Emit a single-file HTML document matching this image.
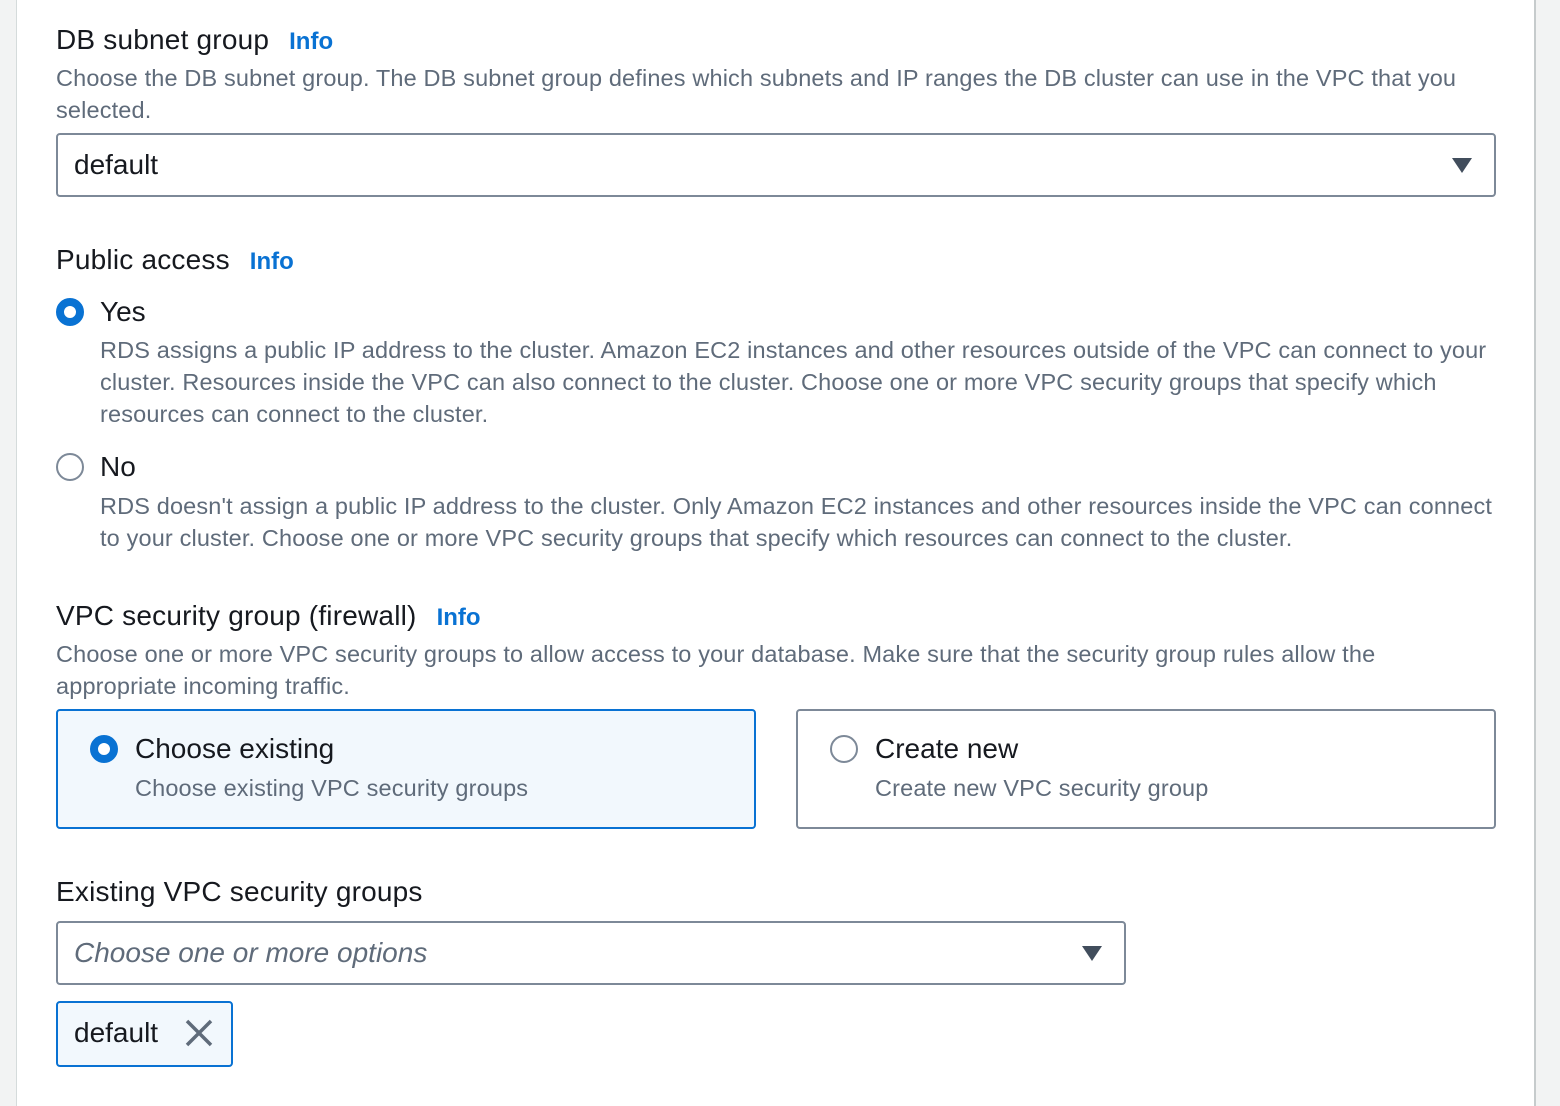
<!DOCTYPE html>
<html><head><meta charset="utf-8"><style>
*{margin:0;padding:0;box-sizing:border-box}
body{width:1560px;height:1092px;background:#f2f3f3;font-family:"Liberation Sans",sans-serif;position:relative;overflow:hidden;color:#16191f}
#panel{position:absolute;left:16px;top:-4px;width:1520px;height:1110px;background:#fff;border-left:1px solid #d5dbdb;border-right:2px solid #c6cbcc}
.a{position:absolute;white-space:nowrap}
.h{font-size:28px;line-height:34px;color:#16191f;letter-spacing:0.2px}
.info{color:#0972d3;font-weight:bold;font-size:24px;margin-left:20px;letter-spacing:0}
.d{font-size:23.5px;line-height:32px;color:#5f6b7a;letter-spacing:0.15px}
.sel{position:absolute;border:2px solid #7d8998;border-radius:4px;background:#fff}
.caret{position:absolute;width:0;height:0;border-left:10px solid transparent;border-right:10px solid transparent;border-top:15px solid #414d5c}
.rad{position:absolute;width:28px;height:28px;border-radius:50%}
.on{background:#fff;border:8px solid #0972d3}
.off{border:2px solid #7d8998;background:#fff}
.lab{font-size:28px;line-height:34px;color:#16191f}
</style></head><body>
<div id="panel"></div>

<div class="a h" style="left:56px;top:23px">DB subnet group<span class="info">Info</span></div>
<div class="a d" style="left:56px;top:62px">Choose the DB subnet group. The DB subnet group defines which subnets and IP ranges the DB cluster can use in the VPC that you</div>
<div class="a d" style="left:56px;top:94px">selected.</div>
<div class="sel" style="left:56px;top:133px;width:1440px;height:64px"></div>
<div class="a lab" style="left:74px;top:148px">default</div>
<div class="caret" style="left:1452px;top:158px"></div>

<div class="a h" style="left:56px;top:243px">Public access<span class="info">Info</span></div>
<div class="rad on" style="left:56px;top:298px"></div>
<div class="a lab" style="left:100px;top:295px">Yes</div>
<div class="a d" style="left:100px;top:334px">RDS assigns a public IP address to the cluster. Amazon EC2 instances and other resources outside of the VPC can connect to your</div>
<div class="a d" style="left:100px;top:366px">cluster. Resources inside the VPC can also connect to the cluster. Choose one or more VPC security groups that specify which</div>
<div class="a d" style="left:100px;top:398px">resources can connect to the cluster.</div>
<div class="rad off" style="left:56px;top:453px"></div>
<div class="a lab" style="left:100px;top:450px">No</div>
<div class="a d" style="left:100px;top:490px">RDS doesn't assign a public IP address to the cluster. Only Amazon EC2 instances and other resources inside the VPC can connect</div>
<div class="a d" style="left:100px;top:522px">to your cluster. Choose one or more VPC security groups that specify which resources can connect to the cluster.</div>

<div class="a h" style="left:56px;top:599px">VPC security group (firewall)<span class="info">Info</span></div>
<div class="a d" style="left:56px;top:638px">Choose one or more VPC security groups to allow access to your database. Make sure that the security group rules allow the</div>
<div class="a d" style="left:56px;top:670px">appropriate incoming traffic.</div>

<div class="sel" style="left:56px;top:709px;width:700px;height:120px;border-color:#0972d3;background:#f2f8fd"></div>
<div class="rad on" style="left:90px;top:735px"></div>
<div class="a lab" style="left:135px;top:732px">Choose existing</div>
<div class="a d" style="left:135px;top:772px">Choose existing VPC security groups</div>
<div class="sel" style="left:796px;top:709px;width:700px;height:120px"></div>
<div class="rad off" style="left:830px;top:735px"></div>
<div class="a lab" style="left:875px;top:732px">Create new</div>
<div class="a d" style="left:875px;top:772px">Create new VPC security group</div>

<div class="a h" style="left:56px;top:875px">Existing VPC security groups</div>
<div class="sel" style="left:56px;top:921px;width:1070px;height:64px"></div>
<div class="a" style="left:74px;top:936px;font-size:28px;line-height:34px;font-style:italic;color:#5f6b7a">Choose one or more options</div>
<div class="caret" style="left:1082px;top:946px"></div>

<div class="sel" style="left:56px;top:1001px;width:177px;height:66px;border-color:#0972d3;background:#f2f8fd"></div>
<div class="a lab" style="left:74px;top:1016px">default</div>
<svg class="a" style="left:184px;top:1018px" width="30" height="30" viewBox="0 0 30 30"><path d="M3 3L27 27M27 3L3 27" stroke="#5f6b7a" stroke-width="3.5"/></svg>
</body></html>
